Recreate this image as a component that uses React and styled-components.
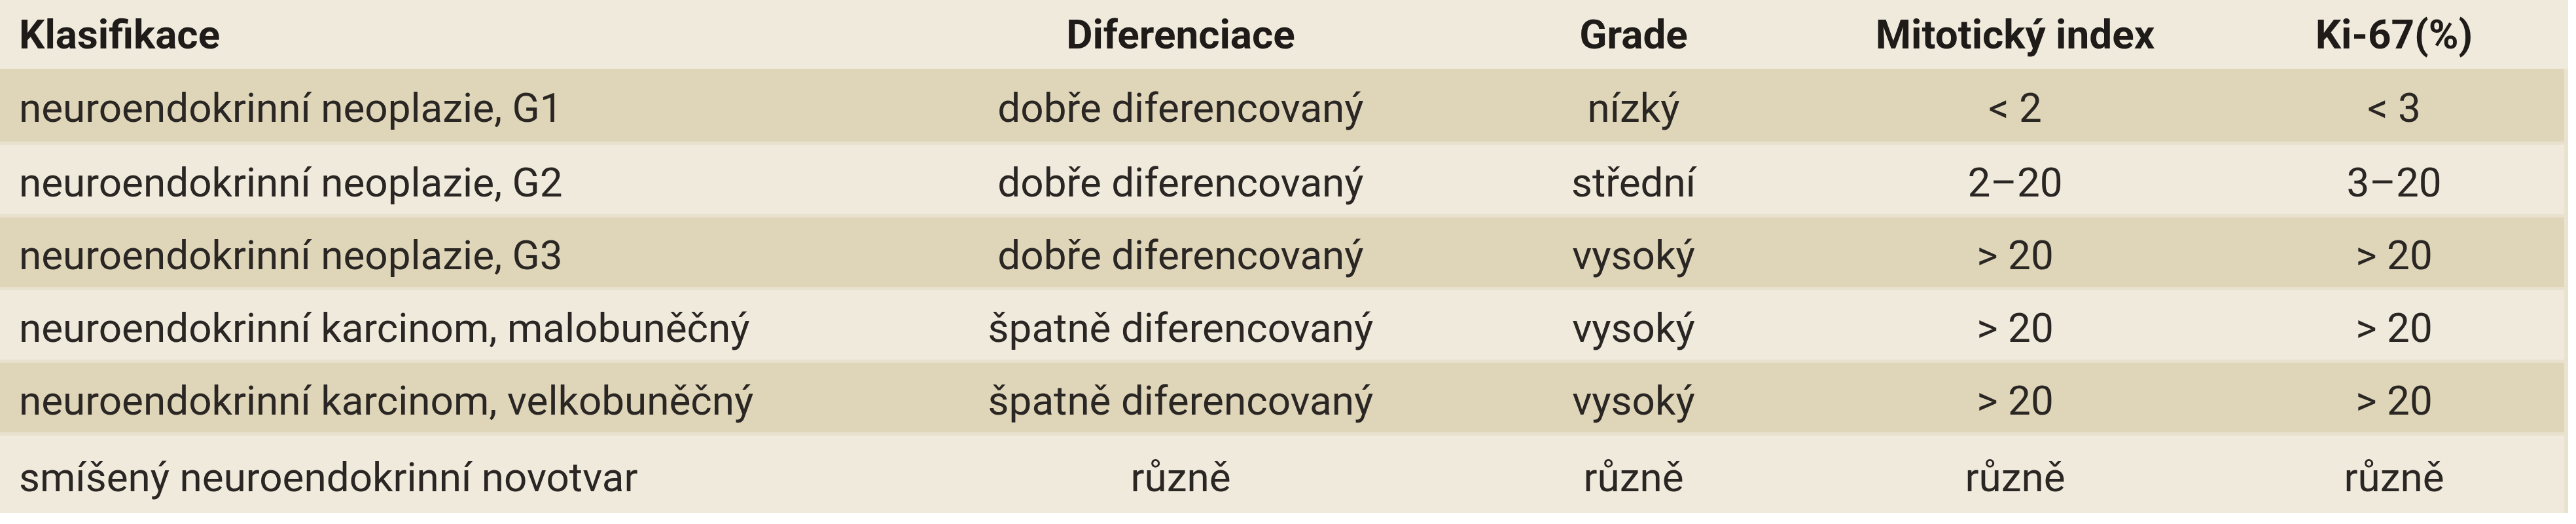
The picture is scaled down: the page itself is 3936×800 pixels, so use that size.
import React from "react";
import styled, { createGlobalStyle } from "styled-components";

const GlobalStyle = createGlobalStyle`
  html, body {
    margin: 0;
    padding: 0;
    background: #ffffff;
  }
  body {
    font-family: Roboto, "Liberation Sans", sans-serif;
    color: #2a2623;
  }
`;

const COLS = "1382px 844px 540px 626px 532px";

const rows = [
  ["neuroendokrinní neoplazie, G1", "dobře diferencovaný", "nízký", "< 2", "< 3"],
  ["neuroendokrinní neoplazie, G2", "dobře diferencovaný", "střední", "2–20", "3–20"],
  ["neuroendokrinní neoplazie, G3", "dobře diferencovaný", "vysoký", "> 20", "> 20"],
  ["neuroendokrinní karcinom, malobuněčný", "špatně diferencovaný", "vysoký", "> 20", "> 20"],
  ["neuroendokrinní karcinom, velkobuněčný", "špatně diferencovaný", "vysoký", "> 20", "> 20"],
  ["smíšený neuroendokrinní novotvar", "různě", "různě", "různě", "různě"]
];

const head = ["Klasifikace", "Diferenciace", "Grade", "Mitotický index", "Ki-67(%)"];

const Table = styled.div`
  width: 3924px;
  display: flex;
  flex-direction: column;
`;

const HeadRow = styled.div`
  display: grid;
  grid-template-columns: ${COLS};
  height: 105px;
  background: #efeadc;
  font-weight: 700;
  color: #1e1b19;
`;

const Row = styled.div`
  display: grid;
  grid-template-columns: ${COLS};
  box-sizing: border-box;
  height: ${props => (props.last ? "123px" : "111px")};
  background: ${props => (props.dark ? "#dfd5b8" : "#efeadc")};
  border-top: ${props => (props.first ? "0" : "5px solid #e8e1cd")};
  border-right: 6px solid #e9e2cf;
`;

const Cell = styled.div`
  display: flex;
  align-items: center;
  justify-content: ${props => (props.left ? "flex-start" : "center")};
  padding-left: ${props => (props.left ? "29px" : "0")};
  padding-top: ${props => (props.head ? "0" : "8px")};
  font-size: 62px;
  white-space: nowrap;
`;

export default function App() {
  return (
    <>
      <GlobalStyle />
      <Table>
        <HeadRow>
          {head.map((h, i) => (
            <Cell key={h} head left={i === 0}>
              {h}
            </Cell>
          ))}
        </HeadRow>
        {rows.map((r, ri) => (
          <Row
            key={r[0]}
            dark={ri % 2 === 0}
            first={ri === 0}
            last={ri === rows.length - 1}
          >
            {r.map((c, ci) => (
              <Cell key={ci} left={ci === 0}>
                {c}
              </Cell>
            ))}
          </Row>
        ))}
      </Table>
    </>
  );
}
